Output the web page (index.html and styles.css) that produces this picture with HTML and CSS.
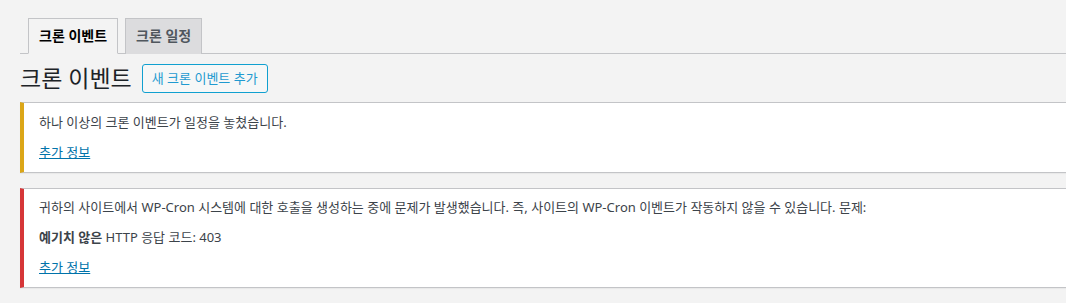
FILE: index.html
```html
<!DOCTYPE html>
<html lang="ko">
<head>
    <meta charset="UTF-8">
    <meta name="viewport" content="width=device-width, initial-scale=1.0">
    <title>크론 이벤트</title>
    <link rel="stylesheet" href="styles.css">
</head>
<body>
    <div class="wrap">
        <nav class="nav-tabs">
            <a class="nav-tab active" href="#">크론 이벤트</a>
            <a class="nav-tab" href="#">크론 일정</a>
        </nav>

        <div class="page-head">
            <h1>크론 이벤트</h1>
            <a class="title-action" href="#">새 크론 이벤트 추가</a>
        </div>

        <div class="notice notice-warning">
            <p>하나 이상의 크론 이벤트가 일정을 놓쳤습니다.</p>
            <p><a href="#">추가 정보</a></p>
        </div>

        <div class="notice notice-error">
            <p>귀하의 사이트에서 WP-Cron 시스템에 대한 호출을 생성하는 중에 문제가 발생했습니다. 즉, 사이트의 WP-Cron 이벤트가 작동하지 않을 수 있습니다. 문제:</p>
            <p><strong>예기치 않은</strong> HTTP 응답 코드: 403</p>
            <p><a href="#">추가 정보</a></p>
        </div>
    </div>
</body>
</html>
```

FILE: styles.css
```css
body, html {
    margin: 0;
    background-color: #f3f3f3;
    color: #3c434a;
    font-family: "Noto Sans", "Noto Sans CJK KR", sans-serif;
    font-size: 13px;
    line-height: 1.5;
    overflow: hidden;
}
.wrap {
    padding-left: 20px;
    margin-right: -20px;
}
a {
    color: #0073aa;
}
.nav-tabs {
    margin-top: 18px;
    padding-left: 8px;
    border-bottom: 1px solid #c3c4c7;
    display: flex;
    gap: 7px;
}
.nav-tab {
    display: block;
    padding: 5px 10px;
    margin-bottom: -1px;
    border: 1px solid #c3c4c7;
    border-bottom: none;
    background-color: #dcdcde;
    color: #50575e;
    font-size: 14px;
    font-weight: 600;
    line-height: 24px;
    text-decoration: none;
}
.nav-tab.active {
    background-color: #f3f3f3;
    color: #000;
    border-bottom: 1px solid #f3f3f3;
}
.page-head {
    display: flex;
    align-items: center;
    gap: 10px;
    padding: 9px 0 4px;
}
h1 {
    margin: 0;
    font-size: 23px;
    font-weight: 400;
    line-height: 30px;
    color: #1d2327;
}
.title-action {
    border: 1px solid #10a0d0;
    border-radius: 3px;
    background-color: #f6f7f7;
    color: #1f9ad0;
    padding: 0 9px;
    line-height: 27px;
    font-size: 13px;
    text-decoration: none;
}
.notice {
    background-color: #fff;
    border: 1px solid #c3c4c7;
    border-left-width: 4px;
    box-shadow: 0 1px 1px rgba(0,0,0,0.04);
    margin: 5px 0 15px;
    padding: 1px 12px 1px 15px;
}
.notice p {
    margin: 6.5px 0;
    padding: 2px 0;
}
.notice-warning {
    border-left-color: #dba617;
}
.notice-error {
    border-left-color: #d63638;
}
strong {
    font-weight: 700;
}
```
